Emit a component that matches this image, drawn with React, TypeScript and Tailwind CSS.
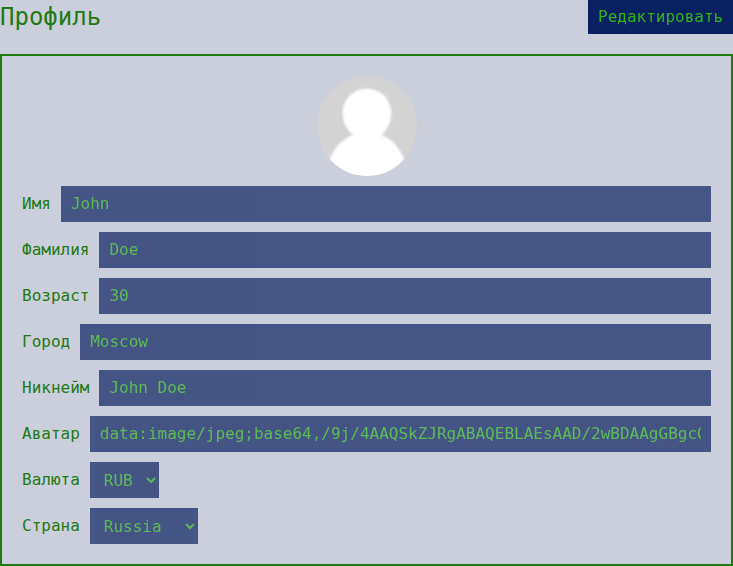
const fields = [
  { label: 'Имя', value: 'John' },
  { label: 'Фамилия', value: 'Doe' },
  { label: 'Возраст', value: '30' },
  { label: 'Город', value: 'Moscow' },
  { label: 'Никнейм', value: 'John Doe' },
  {
    label: 'Аватар',
    value: 'data:image/jpeg;base64,/9j/4AAQSkZJRgABAQEBLAEsAAD/2wBDAAgGBgcGBQgHBwcJCQgKDBQNDAsLDBkSEw8U',
  },
];

const selects = [
  { label: 'Валюта', value: 'RUB', options: ['RUB', 'EUR', 'USD'] },
  { label: 'Страна', value: 'Russia', options: ['Russia', 'Belarus', 'Ukraine', 'Armenia'] },
];

function Avatar() {
  return (
    <svg className="size-[100px] rounded-full" viewBox="0 0 100 100" aria-hidden="true">
      <defs>
        <filter id="soft" x="-10%" y="-10%" width="120%" height="120%">
          <feGaussianBlur stdDeviation="0.8" />
        </filter>
      </defs>
      <rect width="100" height="100" fill="#d3d3d3" />
      <g fill="#fff" filter="url(#soft)">
        <path d="M50 12.700C63.500 12.700 74.200 23 74.200 37C74.200 46.500 70 54 64.500 59C74 62.500 82.500 71 87 83L92 110H8L13 83C17.500 71 26 62.500 36 59C30 54 25.800 46.500 25.800 37C25.800 23 36.500 12.700 50 12.700Z" />
      </g>
    </svg>
  );
}

export default function App() {
  return (
    <div className="flex h-[566px] flex-col bg-[#cbcfdc] font-['DejaVu_Sans_Mono',monospace] text-base leading-6 text-[#217a14]">
      <header className="mb-5 flex items-start justify-between">
        <h1 className="text-2xl leading-[34px]">Профиль</h1>
        <button className="h-[34px] bg-[#0a2161] px-2.5 text-[#2db41e] will-change-transform">Редактировать</button>
      </header>
      <main className="flex grow flex-col gap-2.5 border-2 border-[#217a14] p-5">
        <div className="flex justify-center">
          <Avatar />
        </div>
        {fields.map((f) => (
          <label key={f.label} className="flex h-9 items-center gap-2.5">
            <span>{f.label}</span>
            <input
              readOnly
              value={f.value}
              className="h-9 min-w-0 grow bg-[#0a2161] px-2.5 pt-2 pb-2.5 text-[#2db41e] opacity-70 outline-none"
            />
          </label>
        ))}
        {selects.map((s) => (
          <label key={s.label} className="flex h-9 items-center gap-2.5">
            <span>{s.label}</span>
            <select
              defaultValue={s.value}
              className="h-9 bg-[#0a2161] px-2.5 text-[#2db41e] opacity-70 outline-none"
            >
              {s.options.map((o) => (
                <option key={o}>{o}</option>
              ))}
            </select>
          </label>
        ))}
      </main>
    </div>
  );
}
